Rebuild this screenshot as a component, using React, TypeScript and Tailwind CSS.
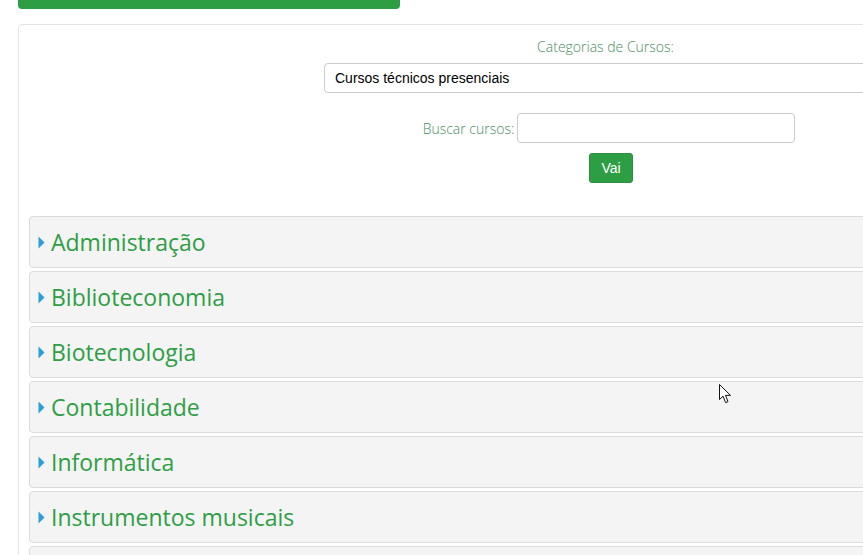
import React from 'react';

const categories = [
  'Administração',
  'Biblioteconomia',
  'Biotecnologia',
  'Contabilidade',
  'Informática',
  'Instrumentos musicais',
  'Logística',
];

function Caret() {
  return (
    <svg width="7" height="13" viewBox="0 0 7 13" className="shrink-0">
      <path d="M0.5 0.5 L6.5 6.5 L0.5 12.5 Z" fill="#2a9fd6" />
    </svg>
  );
}

function Cursor() {
  return (
    <svg width="14" height="22" viewBox="0 0 14 22" className="absolute left-[719px] top-[384px]">
      <path
        d="M0.5 0.5 L0.5 15.5 L4 12.2 L6.6 18.6 L9 17.6 L6.5 11.4 L11.5 11.4 Z"
        fill="#fff"
        stroke="#111"
        strokeWidth="1"
        strokeLinejoin="miter"
      />
    </svg>
  );
}

export default function App() {
  return (
    <div className="relative h-[555px] w-[863px] overflow-hidden bg-white font-['Open_Sans',sans-serif]">
      {/* Breadcrumb bar, scrolled up */}
      <div className="ml-[18px] -mt-[26px] flex h-[35px] w-[382px] items-center gap-2 rounded-b-[4px] bg-[#2e9e45] px-3 text-[13px] text-white">
        <span>Página inicial</span>
        <span className="text-[#d9efdc]">/</span>
        <span>Cursos</span>
        <span className="text-[#d9efdc]">/</span>
        <span>Cursos técnicos presenciais</span>
      </div>

      {/* Main card */}
      <div className="ml-[18px] mt-[15px] w-[880px] rounded-[4px] border border-[#e3e3e3] bg-white px-[10px] pt-[11px]">
        <div className="ml-auto flex w-[563px] flex-col items-center">
          <label className="h-[22px] text-[14px] font-light leading-[22px] text-[#4d8a63]">
            Categorias de Cursos:
          </label>
          <div className="mt-[5px] flex h-[30px] w-full items-center rounded-[4px] border border-[#cccccc] bg-white px-[10px] font-['Liberation_Sans',sans-serif] text-[14px] text-black">
            Cursos técnicos presenciais
          </div>
          <div className="ml-[7px] mt-[20px] flex items-center gap-[3px]">
            <span className="text-[14px] font-light text-[#4d8a63]">Buscar cursos:</span>
            <div className="h-[30px] w-[278px] rounded-[4px] border border-[#cccccc] bg-white" />
          </div>
          <button className="ml-[11px] mt-[10px] flex h-[30px] w-[44px] items-center justify-center rounded-[3px] border border-[#2a8f3e] bg-[#2e9e45] font-['Liberation_Sans',sans-serif] text-[14px] text-white">
            Vai
          </button>
        </div>

        <div className="mt-[33px] flex flex-col gap-[3px]">
          {categories.map((c) => (
            <div
              key={c}
              className="flex h-[52px] items-center gap-[6px] rounded-[4px] border border-[#dcdcdc] bg-[#f4f4f4] pl-[8px]"
            >
              <Caret />
              <span className="text-[23px] leading-none text-[#2e9e45]">{c}</span>
            </div>
          ))}
        </div>
      </div>

      <Cursor />
    </div>
  );
}
